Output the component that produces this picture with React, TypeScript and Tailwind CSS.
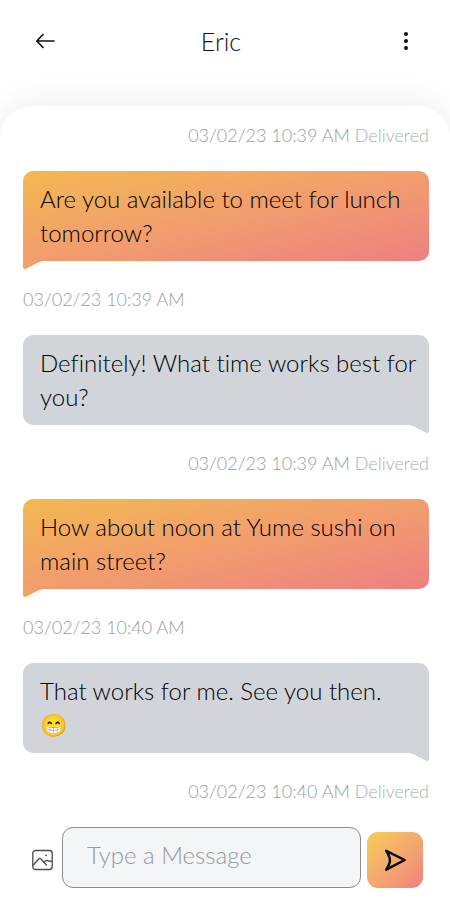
import { useState } from 'react'

interface Message {
  id: number
  text: string
  emoji?: string
  time: string
  mine: boolean
  delivered?: boolean
}

const messages: Message[] = [
  { id: 1, text: 'Are you available to meet for lunch tomorrow?', time: '03/02/23 10:39 AM', mine: true },
  { id: 2, text: 'Definitely! What time works best for you?', time: '03/02/23 10:39 AM', mine: false, delivered: true },
  { id: 3, text: 'How about noon at Yume sushi on main street?', time: '03/02/23 10:40 AM', mine: true },
  { id: 4, text: 'That works for me. See you then.', emoji: '😁', time: '03/02/23 10:40 AM', mine: false, delivered: true },
]

function Timestamp({ time, delivered }: { time: string; delivered?: boolean }) {
  return (
    <p className={`text-[18px] leading-6 text-[#999da3] ${delivered ? 'text-right' : 'text-left'}`}>
      {time}
      {delivered && <span className="text-[#a9adb3]"> Delivered</span>}
    </p>
  )
}

function Bubble({ text, emoji, mine }: { text: string; emoji?: string; mine: boolean }) {
  return (
    <div
      className={`relative mt-6 mb-[26px] rounded-t-[10px] py-[11px] pr-2 pl-[17px] text-2xl leading-[34px] text-black ${
        mine
          ? 'rounded-br-[10px] bg-linear-to-br from-[#f3b94f] to-[#ee8080]'
          : 'rounded-bl-[10px] bg-[#d1d5da]'
      }`}
    >
      {text}
      {emoji && <span className="block h-[34px] text-[22px]">{emoji}</span>}
      {mine ? (
        <svg className="absolute top-full left-0" width="22" height="8" viewBox="0 0 22 8" aria-hidden="true">
          <path d="M0 0H22Q18 0 14 2L4 7.3Q0 9 0 6Z" fill="#f2a161" />
        </svg>
      ) : (
        <svg className="absolute top-full right-0" width="22" height="8" viewBox="0 0 22 8" aria-hidden="true">
          <path d="M22 0H0Q4 0 8 2L18 7.3Q22 9 22 6Z" fill="#d1d5da" />
        </svg>
      )}
    </div>
  )
}

export default function App() {
  const [draft, setDraft] = useState('')

  return (
    <div className="flex min-h-screen flex-col bg-white font-['Lato',sans-serif] font-light [font-variant-ligatures:none]">
      <header className="flex items-center justify-between pt-[23px] pr-6 pb-[47px] pl-[34px]">
        <button type="button" aria-label="Back">
          <svg width="22" height="22" viewBox="0 0 22 22" fill="none" stroke="#111" strokeWidth="1.7" strokeLinecap="round" strokeLinejoin="round">
            <path d="M20 11H3M9 4.500L2.800 11L9 17.500" />
          </svg>
        </button>
        <h1 className="text-[25px] leading-9 text-[#111]">Eric</h1>
        <button type="button" aria-label="More options" className="flex w-10 justify-center">
          <svg width="20" height="22" viewBox="0 0 20 22" fill="#111">
            <circle cx="10" cy="4" r="2" />
            <circle cx="10" cy="11" r="2" />
            <circle cx="10" cy="18" r="2" />
          </svg>
        </button>
      </header>

      <main className="flex grow flex-col rounded-t-[32px] bg-white pt-[17px] pr-[21px] pb-3 pl-[23px] shadow-[0_-4px_32px_rgba(0,0,0,0.07)]">
        <Timestamp time="03/02/23 10:39 AM" delivered />
        {messages.map((message) => (
          <div key={message.id}>
            <Bubble text={message.text} emoji={message.emoji} mine={message.mine} />
            <Timestamp time={message.time} delivered={message.delivered} />
          </div>
        ))}

        <form className="mt-6 flex items-end pr-[6px] pl-2" onSubmit={(e) => e.preventDefault()}>
          <button type="button" aria-label="Attach image" className="mr-2 mb-[17px]">
            <svg width="23" height="22" viewBox="0 0 23 22" fill="none" stroke="#4b4b4b" strokeWidth="1.3" strokeLinecap="round" strokeLinejoin="round">
              <rect x="1.800" y="1.500" width="19.400" height="19" rx="2.800" />
              <path d="M2.300 16L8 9.800Q9 9 10 10L15.500 16M12.800 12.800L14.500 12Q16 11 17.500 12L20.800 12.300" />
              <circle cx="14.800" cy="6.300" r=".4" strokeWidth="1" />
            </svg>
          </button>
          <input
            type="text"
            aria-label="Message"
            placeholder="Type a Message"
            value={draft}
            onChange={(e) => setDraft(e.target.value)}
            className="mr-[6px] h-[61px] min-w-0 flex-1 rounded-[11px] border border-[#8c8c8c] bg-[#f3f5f7] px-6 pb-[6px] text-2xl text-[#222] placeholder:text-[#969aa0] focus:outline-none"
          />
          <button
            type="submit"
            aria-label="Send"
            className="flex size-14 items-center justify-center rounded-[11px] bg-linear-to-br from-[#f5cf4f] to-[#ef7f80]"
          >
            <svg width="24" height="24" viewBox="0 0 26 26" fill="none" stroke="#0b0b0b" strokeWidth="2.700" strokeLinejoin="round">
              <path d="M3.500 3L23.500 13L3.500 23.500Q7.500 17 7.500 13.500Q7.500 9.500 3.500 3Z" />
            </svg>
          </button>
        </form>
      </main>
    </div>
  )
}
